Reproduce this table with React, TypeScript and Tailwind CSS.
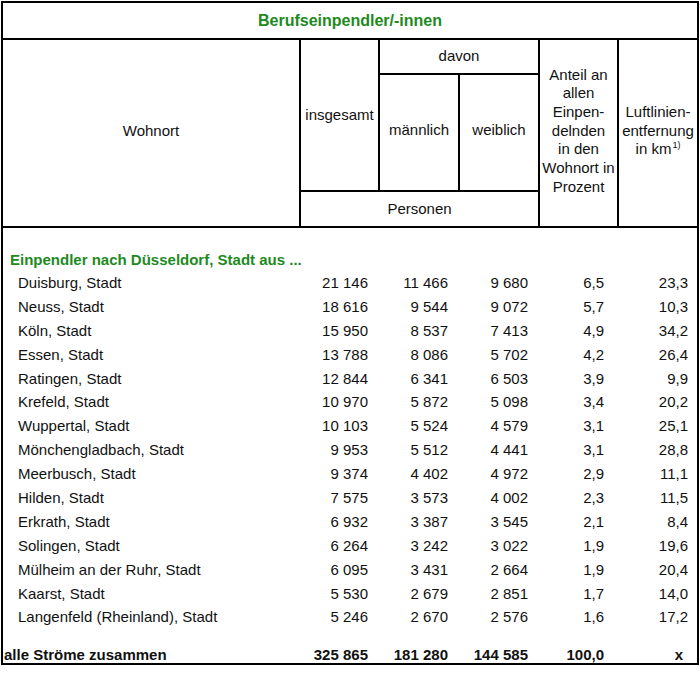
const ROWS: [string, string, string, string, string, string][] = [
  ["Duisburg, Stadt", "21 146", "11 466", "9 680", "6,5", "23,3"],
  ["Neuss, Stadt", "18 616", "9 544", "9 072", "5,7", "10,3"],
  ["Köln, Stadt", "15 950", "8 537", "7 413", "4,9", "34,2"],
  ["Essen, Stadt", "13 788", "8 086", "5 702", "4,2", "26,4"],
  ["Ratingen, Stadt", "12 844", "6 341", "6 503", "3,9", "9,9"],
  ["Krefeld, Stadt", "10 970", "5 872", "5 098", "3,4", "20,2"],
  ["Wuppertal, Stadt", "10 103", "5 524", "4 579", "3,1", "25,1"],
  ["Mönchengladbach, Stadt", "9 953", "5 512", "4 441", "3,1", "28,8"],
  ["Meerbusch, Stadt", "9 374", "4 402", "4 972", "2,9", "11,1"],
  ["Hilden, Stadt", "7 575", "3 573", "4 002", "2,3", "11,5"],
  ["Erkrath, Stadt", "6 932", "3 387", "3 545", "2,1", "8,4"],
  ["Solingen, Stadt", "6 264", "3 242", "3 022", "1,9", "19,6"],
  ["Mülheim an der Ruhr, Stadt", "6 095", "3 431", "2 664", "1,9", "20,4"],
  ["Kaarst, Stadt", "5 530", "2 679", "2 851", "1,7", "14,0"],
  ["Langenfeld (Rheinland), Stadt", "5 246", "2 670", "2 576", "1,6", "17,2"],
];

function DataRow({ cells, bold = false }: { cells: string[]; bold?: boolean }) {
  return (
    <div className={`grid grid-cols-[298px_79px_80px_80px_79px_78px] ${bold ? "h-[16px] leading-[16px] font-bold" : "h-[23.9px] leading-[23.9px]"}`}>
      <div className={bold ? "pl-[1px]" : "pl-[15px]"}>{cells[0]}</div>
      <div className="pr-[12px] text-right">{cells[1]}</div>
      <div className="pr-[12px] text-right">{cells[2]}</div>
      <div className="pr-[12px] text-right">{cells[3]}</div>
      <div className="pr-[15px] text-right">{cells[4]}</div>
      <div className={bold ? "pr-[14px] text-right" : "pr-[9px] text-right"}>{cells[5]}</div>
    </div>
  );
}

export default function App() {
  return (
    <div className="min-h-[680px] bg-white pl-[1px] pt-[1px] font-['Liberation_Sans',Arial,sans-serif] text-[15px] text-[#111]">
      <div className="w-[698px] border-2 border-black">
        {/* Titel */}
        <div className="flex h-[37px] items-center justify-center border-b-2 border-black text-[16px] font-bold text-[#1e8a1e]">
          Berufseinpendler/-innen
        </div>

        {/* Kopfzeilen */}
        <div className="grid grid-cols-[298px_79px_80px_80px_79px_78px] grid-rows-[35px_117px_34px] border-b-2 border-black leading-[18.7px]">
          <div className="col-start-1 row-span-3 row-start-1 flex items-center justify-center border-r-2 border-black pb-[4px]">
            Wohnort
          </div>
          <div className="col-start-2 row-span-2 row-start-1 flex items-center justify-center border-r-2 border-b-2 border-black">
            insgesamt
          </div>
          <div className="col-span-2 col-start-3 row-start-1 flex items-center justify-center border-r-2 border-b-2 border-black pb-[1px]">
            davon
          </div>
          <div className="col-start-3 row-start-2 flex items-center justify-center border-r-2 border-b-2 border-black pb-[4px]">
            männlich
          </div>
          <div className="col-start-4 row-start-2 flex items-center justify-center border-r-2 border-b-2 border-black pb-[4px]">
            weiblich
          </div>
          <div className="col-span-3 col-start-2 row-start-3 flex items-center justify-center border-r-2 border-black">
            Personen
          </div>
          <div className="col-start-5 row-span-3 row-start-1 flex items-center justify-center border-r-2 border-black pb-[4px]">
            <div className="text-center">
              Anteil an
              <br />
              allen
              <br />
              Einpen-
              <br />
              delnden
              <br />
              in den
              <br />
              Wohnort in
              <br />
              Prozent
            </div>
          </div>
          <div className="col-start-6 row-span-3 row-start-1 flex items-center justify-center pb-[4px]">
            <div className="text-center">
              Luftlinien-
              <br />
              entfernung
              <br />
              in km<sup className="relative top-[-6px] ml-[1px] text-[9px]">1)</sup>
            </div>
          </div>
        </div>

        {/* Daten */}
        <div className="flex h-[435px] flex-col pt-[21px]">
          <div className="h-[22px] pl-[7px] leading-[22px] font-bold text-[#1e8a1e]">
            Einpendler nach Düsseldorf, Stadt aus ...
          </div>
          {ROWS.map((r) => (
            <DataRow key={r[0]} cells={r} />
          ))}
          <div className="flex-1" />
          <DataRow bold cells={["alle Ströme zusammen", "325 865", "181 280", "144 585", "100,0", "x"]} />
        </div>
      </div>
    </div>
  );
}
